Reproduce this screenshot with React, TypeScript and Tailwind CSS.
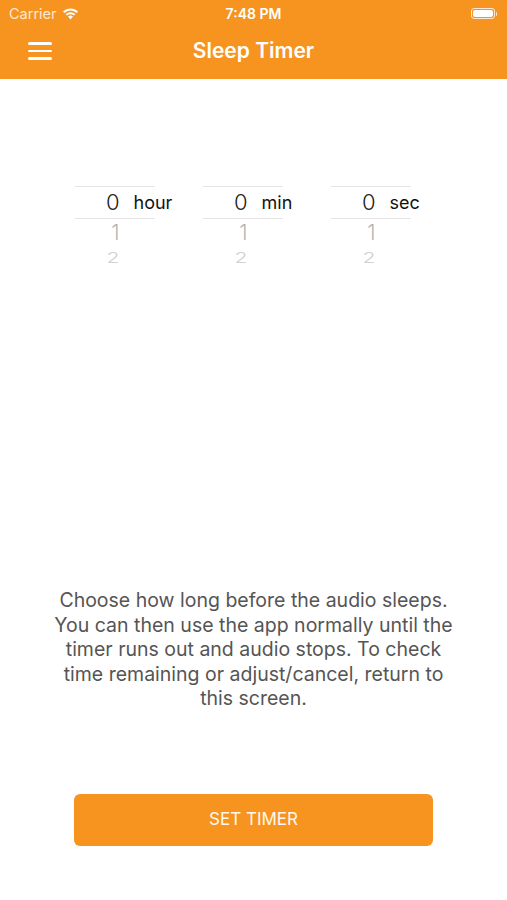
import React from 'react';

const FONT = { fontFamily: 'Inter, "Liberation Sans", Arial, sans-serif' };

function Wheel({ unit }: { unit: string }) {
  return (
    <div className="relative w-[80px] h-[83px]">
      <div className="h-[33px] mt-[3px] border-y border-[#e4e4e4] flex items-center">
        <span className="w-[45px] shrink-0 text-right text-[22px] font-light text-[#222]">0</span>
        <span className="ml-[14px] shrink-0 text-[18px] text-[#111] whitespace-nowrap">{unit}</span>
      </div>
      <div className="h-[47px] overflow-hidden">
        <div className="w-[45px] text-right mt-[1px] text-[21px] leading-[25px] font-light text-[#b5b5b5]">1</div>
        <div className="w-[45px] text-right text-[21px] leading-[25px] font-light text-[#d0d0d0] scale-y-[0.7] origin-center">2</div>
      </div>
    </div>
  );
}

export default function App() {
  return (
    <div className="w-[507px] h-[900px] bg-white flex flex-col" style={FONT}>
      {/* status + nav bar */}
      <div className="bg-[#f7941f] h-[79px] flex flex-col text-white">
        <div className="h-[27px] relative flex items-center px-[9px]">
          <span className="text-[14.5px] text-[#fde9cf]">Carrier</span>
          <svg className="ml-[5px]" width="17" height="13" viewBox="0 0 17 13">
            <path d="M8.5 12.5 L6 9.6 A3.6 3.6 0 0 1 11 9.6 Z" fill="#fff" />
            <path d="M3.6 7.2 A7 7 0 0 1 13.4 7.2 L12 8.6 A5 5 0 0 0 5 8.6 Z" fill="#fff" />
            <path d="M1 4.6 A10.6 10.6 0 0 1 16 4.6 L14.6 6 A8.6 8.6 0 0 0 2.4 6 Z" fill="#fff" />
          </svg>
          <span className="absolute left-0 right-0 text-center text-[14px] font-semibold pointer-events-none">7:48 PM</span>
          <div className="ml-auto mr-[1px] flex items-center">
            <div className="w-[24px] h-[11px] rounded-[3px] border border-[#fde9cf] p-[1px]">
              <div className="w-full h-full bg-white rounded-[2px]" />
            </div>
            <div className="w-[1.5px] h-[4px] bg-[#fde9cf] ml-[1px] rounded-r" />
          </div>
        </div>
        <div className="flex-1 relative flex items-center pb-[4px]">
          <div className="ml-[28px] flex flex-col gap-[5px]">
            <div className="w-[24px] h-[2.5px] bg-white rounded" />
            <div className="w-[24px] h-[2.5px] bg-white rounded" />
            <div className="w-[24px] h-[2.5px] bg-white rounded" />
          </div>
          <span className="absolute left-0 right-0 text-center text-[21px] font-semibold">Sleep Timer</span>
        </div>
      </div>

      {/* picker */}
      <div className="mt-[104px] flex justify-center gap-[48px] pr-[22px]">
        <Wheel unit="hour" />
        <Wheel unit="min" />
        <Wheel unit="sec" />
      </div>

      {/* description */}
      <p className="mt-[322px] px-[30px] text-center text-[19.5px] leading-[24.5px] text-[#555]">
        Choose how long before the audio sleeps.
        <br />
        You can then use the app normally until the
        <br />
        timer runs out and audio stops. To check
        <br />
        time remaining or adjust/cancel, return to
        <br />
        this screen.
      </p>

      {/* button */}
      <div className="mt-[83px] px-[74px]">
        <button className="w-full h-[52px] bg-[#f7941f] rounded-[6px] text-[#fff8ee] text-[17px]">
          SET TIMER
        </button>
      </div>
    </div>
  );
}
